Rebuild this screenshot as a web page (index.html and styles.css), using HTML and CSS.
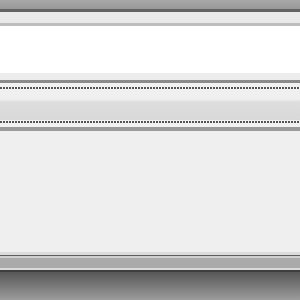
FILE: index.html
```html
<!DOCTYPE html>
<html>
<head>
<meta charset="utf-8">
<link rel="stylesheet" href="styles.css">
</head>
<body>
<div class="frame">
  <div class="titlebar"></div>
  <div class="toolbar"></div>
  <div class="content"></div>
  <div class="divider">
    <div class="rule"></div>
    <div class="dots"></div>
    <div class="band"></div>
    <div class="dots"></div>
    <div class="rule2"></div>
  </div>
  <div class="panel"></div>
  <div class="footer">
    <div class="fline-top"></div>
    <div class="fband"></div>
    <div class="fline-bot"></div>
  </div>
  <div class="base"></div>
</div>
</body>
</html>
```
FILE: styles.css
```css
html, body {
  margin: 0;
  padding: 0;
  width: 300px;
  height: 300px;
  overflow: hidden;
  background: #efefef;
}
.frame {
  display: flex;
  flex-direction: column;
  width: 300px;
  height: 300px;
}
.titlebar {
  height: 9px;
  background: linear-gradient(#a8a8a8, #989898);
  border-bottom: 3px solid #626262;
}
.toolbar {
  height: 11px;
  background: #e9e9e9;
  border-bottom: 3px solid #bdbdbd;
}
.content {
  height: 47px;
  background: #ffffff;
  border-bottom: 7px solid #ececec;
}
.divider {
  display: flex;
  flex-direction: column;
}
.rule {
  height: 3px;
  background: #8a8a8a;
  border-bottom: 3px solid #f1f1f1;
}
.dots {
  height: 2px;
  padding: 1px 0;
  background-color: #f1f1f1;
  background-image: linear-gradient(90deg, #555 0 2px, transparent 2px 3px);
  background-size: 3px 2px;
  background-repeat: repeat-x;
  background-position: 0 1px;
}
.band {
  height: 30px;
  background: linear-gradient(#f0f0f0 0, #f0f0f0 9px, #dedede 12px, #d8d8d8 30px);
}
.rule2 {
  height: 3px;
  background: #f2f2f2;
  border-bottom: 4px solid #9a9a9a;
}
.panel {
  flex: 1;
  background: #efefef;
}
.footer {
  display: flex;
  flex-direction: column;
}
.fline-top {
  height: 3px;
  background: #dcdcdc;
  border-bottom: 1px solid #5e5e5e;
}
.fband {
  height: 10px;
  background: #aaaaaa;
  border-top: 2px solid #cfcfcf;
  border-bottom: 2px solid #dadada;
}
.fline-bot {
  height: 2px;
  background: #3e3e3e;
}
.base {
  height: 28px;
  background: linear-gradient(#575757, #9c9c9c);
}
```
